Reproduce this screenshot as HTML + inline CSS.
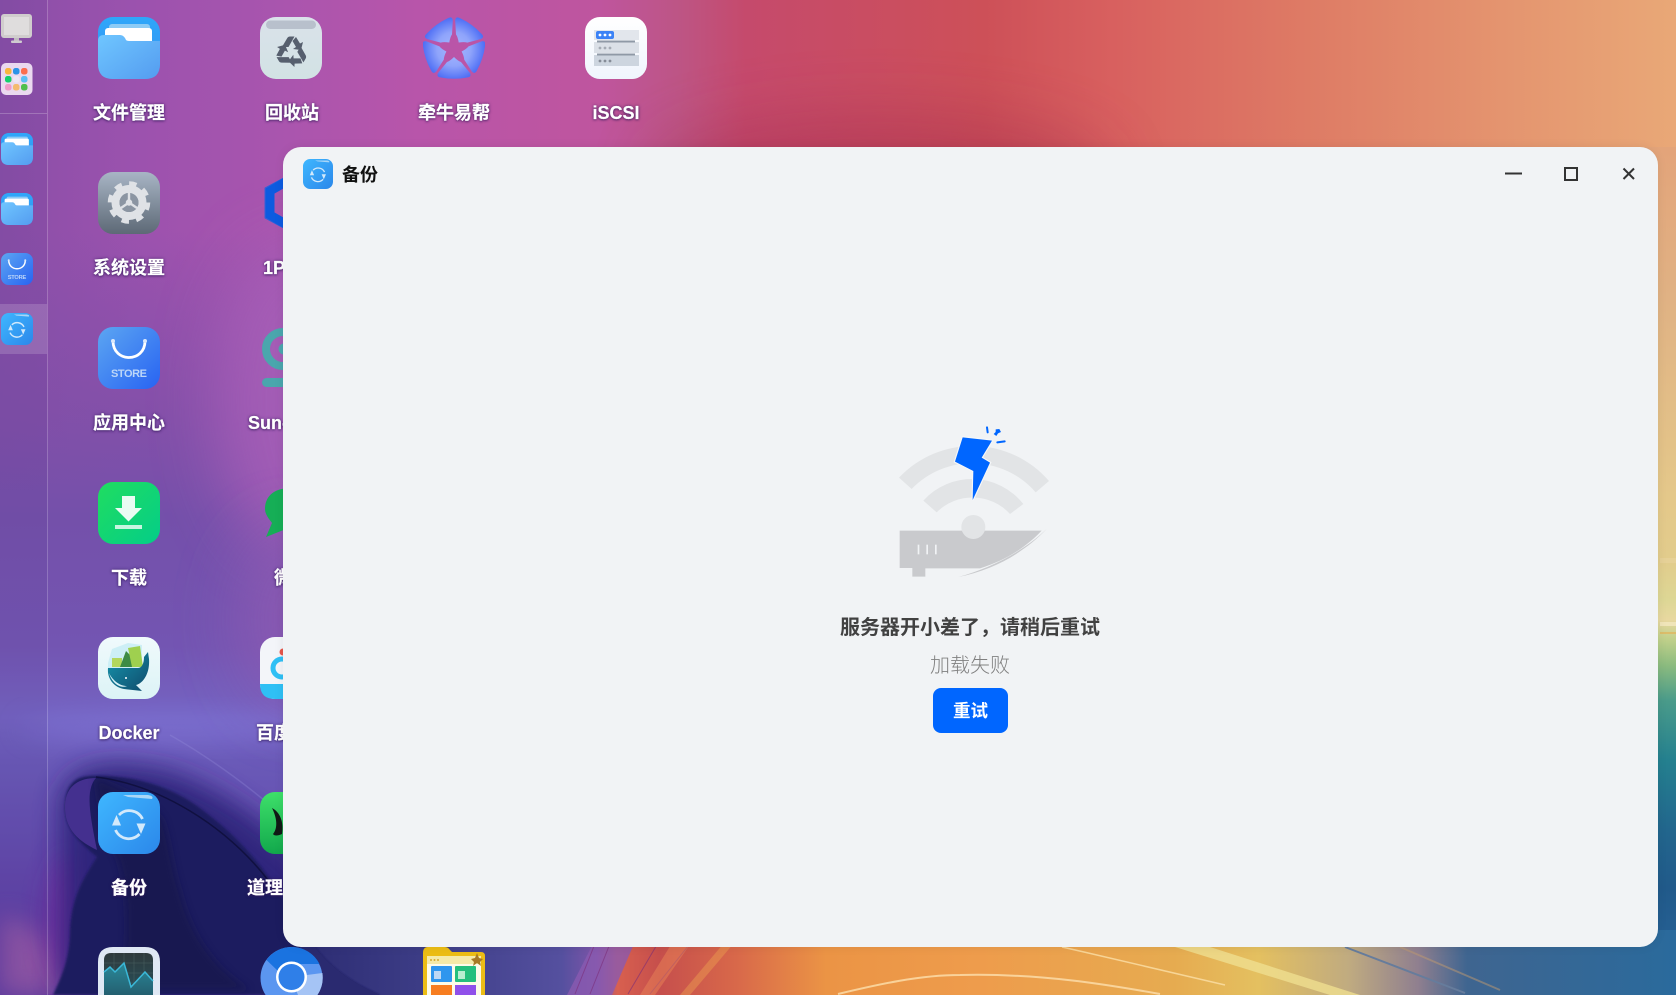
<!DOCTYPE html>
<html lang="zh">
<head>
<meta charset="utf-8">
<title>备份</title>
<style>
html,body{margin:0;padding:0;width:1676px;height:995px;overflow:hidden;background:#8a4fa8;font-family:"Liberation Sans","Noto Sans CJK SC",sans-serif}
.abs{position:absolute}
#bg{position:absolute;left:0;top:0}
.lab{position:absolute;width:180px;text-align:center;color:#fff;font-weight:700;font-size:18px;line-height:24px;white-space:nowrap;-webkit-text-stroke:.2px #fff;text-shadow:0 0 3px rgba(50,25,90,.75),0 1px 2px rgba(50,25,90,.6)}
.ic{position:absolute;width:62px;height:62px}
.sb{position:absolute;left:1px;width:32px;height:32px}
#win{position:absolute;left:283px;top:147px;width:1375px;height:800px;background:#f1f3f5;border-radius:18px;box-shadow:0 0 10px rgba(0,0,0,.07)}
#title{position:absolute;left:59px;top:15px;font-size:18px;font-weight:700;color:#111;line-height:26px}
#h1{position:absolute;left:0;width:1375px;text-align:center;top:468px;font-size:20px;font-weight:700;color:#414141;line-height:26px;text-indent:-1px}
#h2{position:absolute;left:647px;top:505px;width:80px;text-align:center;font-size:20px;font-weight:300;color:#808080;line-height:28px}
#btn{position:absolute;left:650px;top:541px;width:75px;height:45px;background:#0066ff;border-radius:8px;color:#fff;font-weight:700;font-size:17.5px;line-height:47px;text-align:center}
</style>
</head>
<body>
<svg id="bg" width="1676" height="995" viewBox="0 0 1676 995" xmlns="http://www.w3.org/2000/svg">
<defs>
<linearGradient id="top" x1="0" x2="1676" y1="0" y2="0" gradientUnits="userSpaceOnUse">
<stop offset="0" stop-color="#8a4fa8"/><stop offset=".084" stop-color="#9c52ae"/><stop offset=".167" stop-color="#a955ae"/><stop offset=".25" stop-color="#b855aa"/><stop offset=".358" stop-color="#bf559e"/><stop offset=".405" stop-color="#bd5585"/><stop offset=".445" stop-color="#c54a6c"/><stop offset=".587" stop-color="#cd5058"/><stop offset=".664" stop-color="#d8605f"/><stop offset=".78" stop-color="#de7b65"/><stop offset=".896" stop-color="#e4946f"/><stop offset="1" stop-color="#e9a877"/>
</linearGradient>
<linearGradient id="leftv" x1="0" x2="0" y1="230" y2="947" gradientUnits="userSpaceOnUse">
<stop offset="0" stop-color="#7e4fa8" stop-opacity="0"/><stop offset=".25" stop-color="#7e4fa8" stop-opacity=".8"/><stop offset=".4" stop-color="#7450aa"/><stop offset=".58" stop-color="#7355b2"/><stop offset=".68" stop-color="#7464c2"/><stop offset=".74" stop-color="#6a5ab8"/><stop offset="1" stop-color="#5a3aa0"/>
</linearGradient>
<linearGradient id="rightv" x1="0" x2="0" y1="0" y2="995" gradientUnits="userSpaceOnUse">
<stop offset="0" stop-color="#e9a877"/><stop offset=".15" stop-color="#e3a47a"/><stop offset=".3" stop-color="#e0b284"/><stop offset=".5" stop-color="#e4c88a"/><stop offset=".563" stop-color="#e2cc8c"/><stop offset=".603" stop-color="#ddd795"/><stop offset=".623" stop-color="#e8d8a0"/><stop offset=".643" stop-color="#bfd08a"/><stop offset=".669" stop-color="#8bbb7f"/><stop offset=".704" stop-color="#4a9b8a"/><stop offset=".765" stop-color="#24808f"/><stop offset=".834" stop-color="#22668d"/><stop offset=".892" stop-color="#215a8a"/><stop offset="1" stop-color="#2a659c"/>
</linearGradient>
<linearGradient id="botg" x1="283" x2="1676" y1="0" y2="0" gradientUnits="userSpaceOnUse">
<stop offset="0" stop-color="#2a2a70"/><stop offset=".12" stop-color="#40408a"/><stop offset=".2" stop-color="#55509f"/><stop offset=".225" stop-color="#7d55a8"/><stop offset=".24" stop-color="#d8604f"/><stop offset=".27" stop-color="#c64f4c"/><stop offset=".325" stop-color="#d8684a"/><stop offset=".39" stop-color="#eb9445"/><stop offset=".5" stop-color="#ee9c4c"/><stop offset=".64" stop-color="#e6ab50"/><stop offset=".7" stop-color="#e4c060"/><stop offset=".765" stop-color="#c0ab80"/><stop offset=".815" stop-color="#8f7f8f"/><stop offset=".85" stop-color="#3f6590"/><stop offset="1" stop-color="#2a6a9c"/>
</linearGradient>
<filter id="b40" x="-60%" y="-60%" width="220%" height="220%"><feGaussianBlur stdDeviation="32"/></filter>
<filter id="b14" x="-60%" y="-60%" width="220%" height="220%"><feGaussianBlur stdDeviation="13"/></filter>
<filter id="b4" x="-20%" y="-20%" width="140%" height="140%"><feGaussianBlur stdDeviation="4"/></filter>
<filter id="b1"><feGaussianBlur stdDeviation="1"/></filter>
</defs>
<rect width="1676" height="995" fill="url(#top)"/>
<rect x="0" y="0" width="420" height="995" fill="url(#leftv)"/>
<ellipse cx="300" cy="400" rx="85" ry="160" fill="#a85fb8" opacity=".85" filter="url(#b40)"/>
<ellipse cx="300" cy="620" rx="60" ry="90" fill="#8c5ab2" opacity=".9" filter="url(#b40)"/>
<ellipse cx="170" cy="728" rx="150" ry="14" fill="#8278dc" opacity=".5" filter="url(#b14)"/>
<path d="M0 995 L0 915 Q70 935 70 995Z" fill="#b468a8" opacity=".6" filter="url(#b14)"/>
<ellipse cx="70" cy="920" rx="22" ry="65" fill="#8a2fa6" opacity=".7" filter="url(#b14)"/>
<!-- dark red band along top -->
<ellipse cx="880" cy="175" rx="230" ry="60" fill="#a02c50" opacity=".42" filter="url(#b40)"/>
<!-- right strip -->
<rect x="1630" y="147" width="46" height="848" fill="url(#rightv)"/>
<rect x="1660" y="558" width="16" height="5" fill="#e8d39b" opacity=".7"/>
<rect x="1660" y="622" width="16" height="4" fill="#f4e8c0" opacity=".8"/>
<rect x="1660" y="632" width="16" height="2" fill="#e0b860" opacity=".8"/>
<!-- swirl halo -->
<path d="M60 800 C66 765 110 758 170 772 C240 795 290 845 340 895 L340 994 L60 994Z" fill="#2c2478" opacity=".9" filter="url(#b14)"/>
<!-- bottom strip -->
<rect x="283" y="930" width="1393" height="65" fill="url(#botg)"/>
<path d="M567 995 L600 930 L640 930 L612 995Z" fill="#8a5ab0" opacity=".8"/>
<path d="M628 994 L665 931 M650 994 L700 931 M590 994 L615 931 M575 994 L600 931" stroke="#7c2d78" stroke-width="1" fill="none" opacity=".6"/>
<path d="M640 995 L680 930 L700 930 L655 995Z" fill="#ee8a58" opacity=".45"/>
<path d="M680 995 L735 930 L745 930 L690 995Z" fill="#eda050" opacity=".45"/>
<path d="M838 994 C880 984 920 975 960 975 C1040 973 1110 985 1160 994" stroke="#fbdca8" stroke-width="2" fill="none" opacity=".85"/>
<path d="M1062 947 C1120 960 1180 975 1225 985" stroke="#fbe0a8" stroke-width="1.500" fill="none" opacity=".8"/>
<path d="M1175 947 L1210 947 L1360 995 L1330 995Z" fill="#efdf90" opacity=".8"/>
<path d="M1345 947 L1465 993" stroke="#667c9c" stroke-width="2" fill="none"/>
<path d="M1400 947 L1500 990" stroke="#c09a70" stroke-width="2" fill="none" opacity=".5"/>
<!-- swirl -->
<path d="M65 805 C66 782 78 775 95 776 C130 775 172 785 205 812 C245 842 270 875 300 925 C320 960 345 980 380 995 L53 995 C64 972 70 955 70 930 C72 895 84 878 97 857 C80 842 64 830 65 805Z" fill="#1d1d5e" filter="url(#b1)"/>
<path d="M65 805 C66 785 80 778 96 778 C85 790 90 815 97 850 C80 842 64 830 65 805Z" fill="#44308f"/>
<path d="M96 778 C125 790 150 800 163 820 C170 840 172 865 180 890 C190 930 210 965 250 990 L120 990 C128 950 130 900 118 860 C108 840 98 810 96 778Z" fill="#131445" opacity=".55" filter="url(#b4)"/>
<path d="M300 925 C320 960 345 980 380 995 L300 995Z" fill="#2a2a70"/>
<path d="M96 777 C160 785 225 825 268 880" stroke="#0e0e38" stroke-width="1.500" fill="none" opacity=".8"/>
<path d="M170 735 C205 755 240 780 270 805" stroke="#9a92e0" stroke-width="1.500" fill="none" opacity=".28"/>
<!-- sidebar -->
<rect x="0" y="0" width="47" height="995" fill="#503a8c" opacity=".1"/>
<rect x="47" y="0" width="1" height="995" fill="#fff" opacity=".2"/>
<rect x="0" y="113" width="47" height="1" fill="#fff" opacity=".22"/>
<rect x="0" y="304" width="47" height="50" fill="#fff" opacity=".16"/>
</svg>

<svg width="0" height="0" style="position:absolute" xmlns="http://www.w3.org/2000/svg">
<defs>
<linearGradient id="fgA" x1="0" y1="0" x2="0" y2="1"><stop offset="0" stop-color="#2ea7fa"/><stop offset="1" stop-color="#3a8ff0"/></linearGradient>
<linearGradient id="fgB" x1="0" y1="0" x2="1" y2="1"><stop offset="0" stop-color="#6fc6ff"/><stop offset="1" stop-color="#549cf0"/></linearGradient>
<linearGradient id="bkA" x1="0" y1="0" x2="1" y2="1"><stop offset="0" stop-color="#3fb7ff"/><stop offset="1" stop-color="#2b87ea"/></linearGradient>
<linearGradient id="stA" x1="0" y1="0" x2="1" y2="1"><stop offset="0" stop-color="#5ca6f2"/><stop offset="1" stop-color="#2863f2"/></linearGradient>
<symbol id="folder" viewBox="0 0 62 62">
<rect width="62" height="62" rx="15" fill="url(#fgA)"/>
<rect x="11" y="7" width="41" height="14" rx="3" fill="#8ccbf5"/>
<rect x="7" y="11" width="47" height="16" rx="3" fill="#fff"/>
<path d="M0 24 Q0 18 6 18 L22 18 Q25 18 27 21 L28 23 Q29 24 31 24 L62 24 L62 47 Q62 62 47 62 L15 62 Q0 62 0 47Z" fill="url(#fgB)"/>
</symbol>
<symbol id="backup" viewBox="0 0 62 62">
<rect width="62" height="62" rx="15" fill="url(#bkA)"/>
<path d="M25 3 L50 3 Q56 4 54 7 L30 5Z" fill="#a9d6f7"/>
<g fill="none" stroke="#d2e9fb" stroke-width="2.800">
<path d="M21 23 A14.500 14.500 0 0 1 44.500 27"/>
<path d="M41.500 42 A14.500 14.500 0 0 1 17.500 38"/>
</g>
<path d="M18.500 23 L23 33.500 L14 33.500Z" fill="#d2e9fb"/>
<path d="M43 42 L38.500 31.500 L47.500 31.500Z" fill="#d2e9fb"/>
</symbol>
<symbol id="store" viewBox="0 0 62 62">
<rect width="62" height="62" rx="15" fill="url(#stA)"/>
<path d="M15 14 C15 36 47 36 47 14" fill="none" stroke="#fff" stroke-width="2.800" stroke-linecap="round"/>
<circle cx="15" cy="14" r="2" fill="#dbe9fb"/><circle cx="47" cy="14" r="2" fill="#dbe9fb"/>
<text x="31" y="50" text-anchor="middle" font-family="Liberation Sans,sans-serif" font-size="11" font-weight="700" textLength="36" lengthAdjust="spacing" fill="#bcd6f8">STORE</text>
</symbol>
</defs>
</svg>

<!-- sidebar icons -->
<svg class="abs" style="left:1px;top:14px" width="32" height="30" viewBox="0 0 32 30"><rect x="0" y="0" width="31" height="24" rx="3" fill="#d0cdcd"/><rect x="3" y="3" width="25" height="18" fill="#dfdddd"/><rect x="13" y="24" width="5" height="3" fill="#c0bcc0"/><rect x="10" y="26.500" width="11" height="2.500" rx="1" fill="#cfcbd0"/></svg>
<svg class="abs" style="left:1px;top:63px" width="32" height="32" viewBox="0 0 32 32"><rect width="31.500" height="32" rx="5" fill="#ead9ef"/><g>
<rect x="4" y="5" width="6.500" height="6.500" rx="2.500" fill="#f9b63e"/><rect x="12" y="5" width="6.500" height="6.500" rx="2.500" fill="#2b93e8"/><rect x="20" y="5" width="6.500" height="6.500" rx="2.500" fill="#fc6d4f"/>
<rect x="4" y="13" width="6.500" height="6.500" rx="2.500" fill="#14cf6c"/><rect x="12" y="13" width="6.500" height="6.500" rx="2.500" fill="#ece6f4"/><rect x="20" y="13" width="6.500" height="6.500" rx="2.500" fill="#5bbef5"/>
<rect x="4" y="21" width="6.500" height="6.500" rx="2.500" fill="#f09ac8"/><rect x="12" y="21" width="6.500" height="6.500" rx="2.500" fill="#f4ba70"/><rect x="20" y="21" width="6.500" height="6.500" rx="2.500" fill="#4fbf4f"/></g></svg>
<svg class="sb" style="top:133px"><use href="#folder" width="32" height="32"/></svg>
<svg class="sb" style="top:193px"><use href="#folder" width="32" height="32"/></svg>
<svg class="sb" style="top:253px"><use href="#store" width="32" height="32"/></svg>
<svg class="sb" style="top:313px"><use href="#backup" width="32" height="32"/></svg>

<!-- desktop icons col 1 -->
<svg class="ic" style="left:98px;top:17px"><use href="#folder" width="62" height="62"/></svg>
<div class="lab" style="left:39px;top:101px">文件管理</div>

<svg class="ic" style="left:98px;top:172px" viewBox="0 0 62 62"><defs><linearGradient id="gr" x1="0" y1="0" x2="0" y2="1"><stop offset="0" stop-color="#a8b5c5"/><stop offset="1" stop-color="#5d6976"/></linearGradient></defs><rect width="62" height="62" rx="15" fill="url(#gr)"/>
<circle cx="31" cy="30.500" r="19" fill="none" stroke="#dfe2e6" stroke-width="4.500" stroke-dasharray="7.500 7.420"/>
<circle cx="31" cy="30.500" r="13.500" fill="none" stroke="#dfe2e6" stroke-width="8"/>
<circle cx="31" cy="30.500" r="9.500" fill="#8b95a2"/>
<path d="M31 30.500 L31 21 M31 30.500 L23 36 M31 30.500 L39 36" stroke="#dfe2e6" stroke-width="2.400"/><circle cx="31" cy="30.500" r="3.200" fill="#dfe2e6"/></svg>
<div class="lab" style="left:39px;top:256px">系统设置</div>

<svg class="ic" style="left:98px;top:327px"><use href="#store" width="62" height="62"/></svg>
<div class="lab" style="left:39px;top:411px">应用中心</div>

<svg class="ic" style="left:98px;top:482px" viewBox="0 0 62 62"><defs><linearGradient id="dl" x1="0" y1="0" x2="1" y2="1"><stop offset="0" stop-color="#20dd60"/><stop offset="1" stop-color="#04cd88"/></linearGradient></defs><rect width="62" height="62" rx="15" fill="url(#dl)"/>
<path d="M24 14 L37 14 L37 26 L44 26 L30.500 39.500 L17 26 L24 26Z" fill="#eafcf3"/><rect x="17" y="43" width="27" height="4" fill="#c8f5e0"/></svg>
<div class="lab" style="left:39px;top:566px">下载</div>

<svg class="ic" style="left:98px;top:637px" viewBox="0 0 62 62"><defs><linearGradient id="wh" x1="0" y1="0" x2="1" y2="1"><stop offset="0" stop-color="#1696ae"/><stop offset="1" stop-color="#0f4a6b"/></linearGradient><linearGradient id="dk" x1="0" y1="0" x2="0" y2="1"><stop offset="0" stop-color="#f0fafc"/><stop offset="1" stop-color="#dcf3f6"/></linearGradient></defs><rect width="62" height="62" rx="15" fill="url(#dk)"/>
<path d="M10 26 L14 12 L30 6 L44 8 L44 30 L10 34Z" fill="#cdeff6"/>
<rect x="14" y="21" width="10" height="9" fill="#b3d75d"/>
<path d="M22 30 L28 14 L44 30Z" fill="#3d8b45"/>
<path d="M30 11 L42 9 L45 30 L34 30Z" fill="#9fd04f"/>
<path d="M10 31 L40 31 C44 31 46 26 46 20 L50 15 L51 22 C52 35 46 46 38 48 L44 54 L26 52 C16 50 9 42 10 31Z" fill="url(#wh)"/>
<path d="M11 36 C15 44 22 49 29 49 C22 52 14 46 11 36Z" fill="#d9f2f6"/><circle cx="28" cy="41" r="1" fill="#fff"/></svg>
<div class="lab" style="left:39px;top:721px">Docker</div>

<svg class="ic" style="left:98px;top:792px"><use href="#backup" width="62" height="62"/></svg>
<div class="lab" style="left:39px;top:876px">备份</div>

<svg class="ic" style="left:98px;top:947px;height:48px" viewBox="0 0 62 48"><defs><linearGradient id="sc" x1="0" y1="0" x2="0" y2="1"><stop offset="0" stop-color="#2f3a3c"/><stop offset="1" stop-color="#26505c"/></linearGradient><linearGradient id="cf" x1="0" y1="0" x2="0" y2="1"><stop offset="0" stop-color="#2a8a9a"/><stop offset="1" stop-color="#245f70"/></linearGradient></defs><path d="M0 15 Q0 0 15 0 L47 0 Q62 0 62 15 L62 48 L0 48Z" fill="#dfe8f4"/><path d="M6 13 Q6 6 13 6 L48 6 Q55 6 55 13 L55 48 L6 48Z" fill="url(#sc)"/>
<path d="M16 6 V48 M26 6 V48 M36 6 V48 M46 6 V48 M6 16 H55 M6 26 H55 M6 36 H55" stroke="#57706f" stroke-width=".5" opacity=".7"/>
<path d="M6 25 L12 20 L17 25 L26 16 L33 40 L47 25 L55 34 L55 48 L6 48Z" fill="url(#cf)"/>
<path d="M6 25 L12 20 L17 25 L26 16 L33 40 L47 25 L55 34" fill="none" stroke="#3bb8d8" stroke-width="1.500"/></svg>

<!-- col 2 -->
<svg class="ic" style="left:260px;top:17px" viewBox="0 0 62 62"><defs><linearGradient id="rc" x1="0" y1="0" x2="0" y2="1"><stop offset="0" stop-color="#dae2ea"/><stop offset="1" stop-color="#d2e2e4"/></linearGradient></defs><rect width="62" height="62" rx="16" fill="url(#rc)"/><rect x="6" y="3.500" width="50" height="8.500" rx="4.200" fill="#b8c0cc"/>
<g fill="#565f6e"><g><path d="M22 30 L27 21.500 Q28 19.500 30 19.500 L34.500 19.500 L28.500 30Z"/><path d="M36 20 L40 26.500 L43 25 L41 33 L33 32 L36 30 L32.500 24Z"/></g><g transform="rotate(120 31.500 35)"><path d="M22 30 L27 21.500 Q28 19.500 30 19.500 L34.500 19.500 L28.500 30Z"/><path d="M36 20 L40 26.500 L43 25 L41 33 L33 32 L36 30 L32.500 24Z"/></g><g transform="rotate(240 31.500 35)"><path d="M22 30 L27 21.500 Q28 19.500 30 19.500 L34.500 19.500 L28.500 30Z"/><path d="M36 20 L40 26.500 L43 25 L41 33 L33 32 L36 30 L32.500 24Z"/></g></g></svg>
<div class="lab" style="left:202px;top:101px">回收站</div>

<svg class="ic" style="left:260px;top:172px" viewBox="0 0 62 62"><path d="M31 2 L57 16 L57 46 L31 60 L5 46 L5 16Z" fill="none" stroke="#1f63e0" stroke-width=".8"/><path d="M31 7 L52 19 L52 43 L31 55 L10 43 L10 19Z" fill="none" stroke="#0d5be0" stroke-width="9"/></svg>
<div class="lab" style="left:202px;top:256px">1Panel</div>

<svg class="ic" style="left:260px;top:327px" viewBox="0 0 62 62"><circle cx="23" cy="22" r="17" fill="none" stroke="#4aa6ad" stroke-width="8"/><circle cx="24" cy="22" r="5.500" fill="#4aa6ad"/><rect x="2" y="51" width="58" height="9" rx="4.500" fill="#4aa6ad"/></svg>
<div class="lab" style="left:202px;top:411px">Sun-Panel</div>

<svg class="ic" style="left:260px;top:482px" viewBox="0 0 62 62"><path d="M31 6 C12 6 5 16 5 27 C5 33 10 38 12 41 L6 55 L26 47 C45 47 58 39 58 25 C58 13 48 6 31 6Z" fill="#16ae56"/></svg>
<div class="lab" style="left:202px;top:566px">微信</div>

<svg class="ic" style="left:260px;top:637px" viewBox="0 0 62 62"><rect width="62" height="62" rx="15" fill="#f3f5f9"/><path d="M0 47 L62 47 Q62 62 47 62 L15 62 Q0 62 0 47Z" fill="#2fc0f5"/><circle cx="22" cy="31" r="9" fill="none" stroke="#2fc0f5" stroke-width="5"/><circle cx="23" cy="15" r="3.500" fill="#e8564a"/></svg>
<div class="lab" style="left:202px;top:721px">百度网盘</div>

<svg class="ic" style="left:260px;top:792px" viewBox="0 0 62 62"><defs><linearGradient id="dg" x1="0" y1="0" x2="0" y2="1"><stop offset="0" stop-color="#3ee06a"/><stop offset="1" stop-color="#12a84c"/></linearGradient></defs><rect width="62" height="62" rx="15" fill="url(#dg)"/><path d="M12 16 C20 20 24 30 22 42 C18 44 14 44 13 42 C18 36 17 26 12 16Z" fill="#111a16"/></svg>
<div class="lab" style="left:202px;top:876px">道理云笔记</div>

<svg class="ic" style="left:260px;top:947px;width:63px;height:48px" viewBox="0 0 63 48"><path d="M5.600 48 A31 31 0 1 1 57.400 48Z" fill="#5b96f0"/><path d="M31.500 30 L62.400 26 A31 31 0 0 1 57.400 48 L38 48Z" fill="#a5c4f5"/><path d="M31.500 0 A31 31 0 0 1 59.500 17 L31.500 17 L18 24 L6.500 13 A31 31 0 0 1 31.500 0Z" fill="#1a73e0"/><circle cx="31.500" cy="30" r="15.500" fill="#fff"/><circle cx="31.500" cy="30" r="13" fill="#2f7fe8"/></svg>

<!-- col 3 -->
<svg class="ic" style="left:423px;top:17px" viewBox="0 0 62 62"><defs><radialGradient id="st" gradientUnits="userSpaceOnUse" cx="31" cy="32" r="31"><stop offset="0" stop-color="#a6b8ff"/><stop offset=".55" stop-color="#8fa4fb"/><stop offset="1" stop-color="#4f6ff5"/></radialGradient></defs>
<g fill="url(#st)"><path d="M31 40 Q35 44 38 45 L47 56 Q49 60 44 60.500 Q31 63 18 60.500 Q13 60 15 56 L24 45 Q27 44 31 40Z"/><path d="M31 40 Q35 44 38 45 L47 56 Q49 60 44 60.500 Q31 63 18 60.500 Q13 60 15 56 L24 45 Q27 44 31 40Z" transform="rotate(72 31 32)"/><path d="M31 40 Q35 44 38 45 L47 56 Q49 60 44 60.500 Q31 63 18 60.500 Q13 60 15 56 L24 45 Q27 44 31 40Z" transform="rotate(144 31 32)"/><path d="M31 40 Q35 44 38 45 L47 56 Q49 60 44 60.500 Q31 63 18 60.500 Q13 60 15 56 L24 45 Q27 44 31 40Z" transform="rotate(216 31 32)"/><path d="M31 40 Q35 44 38 45 L47 56 Q49 60 44 60.500 Q31 63 18 60.500 Q13 60 15 56 L24 45 Q27 44 31 40Z" transform="rotate(288 31 32)"/></g></svg>
<div class="lab" style="left:364px;top:101px">牵牛易帮</div>

<svg class="ic" style="left:423px;top:947px;height:48px" viewBox="0 0 62 48"><path d="M0 6 Q0 0 5 0 L22 0 Q25 0 27 3 L29 5 L58 5 Q62 5 62 9 L62 48 L0 48Z" fill="#ecbd15"/><rect x="4" y="9" width="54" height="39" fill="#fdfbe8"/><rect x="4" y="9" width="54" height="8" fill="#f5eaa8"/><circle cx="8" cy="13" r="1" fill="#d4a930"/><circle cx="11.500" cy="13" r="1" fill="#d4a930"/><circle cx="15" cy="13" r="1" fill="#d4a930"/>
<rect x="8" y="19" width="21" height="16" rx="1" fill="#2e96ee"/><rect x="32" y="19" width="21" height="16" rx="1" fill="#24bf7c"/><rect x="8" y="38" width="21" height="10" fill="#f77d20"/><rect x="32" y="38" width="21" height="10" fill="#9050ea"/>
<rect x="11" y="24" width="7" height="8" fill="#bcd8f4"/><rect x="35" y="24" width="7" height="8" fill="#b8eed0"/>
<path d="M54 6 L56 11 L60 12 L57 15 L58 19 L54 16 L50 19 L51 15 L48 12 L52 11Z" fill="#a87a24"/></svg>

<!-- col 4 -->
<svg class="ic" style="left:585px;top:17px" viewBox="0 0 62 62"><defs><linearGradient id="is" x1="0" y1="0" x2="0" y2="1"><stop offset="0" stop-color="#fff"/><stop offset="1" stop-color="#f0f5fd"/></linearGradient></defs><rect width="62" height="62" rx="15" fill="url(#is)"/>
<rect x="9" y="13" width="45" height="10" fill="#e2e6ec"/><rect x="9" y="25" width="45" height="11" fill="#dbe0e7"/><rect x="9" y="38" width="45" height="11" fill="#cdd5df"/>
<rect x="11" y="14" width="18" height="8" rx="2" fill="#3b82f6"/>
<g fill="#fff"><circle cx="15" cy="18" r="1.400"/><circle cx="20" cy="18" r="1.400"/><circle cx="25" cy="18" r="1.400"/></g>
<rect x="12" y="23.500" width="38" height="2" fill="#8f99a6"/><rect x="12" y="36.500" width="38" height="2" fill="#8f99a6"/>
<g fill="#a5abb4"><circle cx="15" cy="31" r="1.400"/><circle cx="20" cy="31" r="1.400"/><circle cx="25" cy="31" r="1.400"/></g>
<g fill="#868d98"><circle cx="15" cy="44" r="1.400"/><circle cx="20" cy="44" r="1.400"/><circle cx="25" cy="44" r="1.400"/></g></svg>
<div class="lab" style="left:526px;top:101px">iSCSI</div>

<!-- window -->
<div id="win">
  <svg class="abs" style="left:20px;top:12px" width="30" height="30"><use href="#backup" width="30" height="30"/></svg>
  <div id="title">备份</div>
  <svg class="abs" style="left:1215px;top:10px" width="150" height="34" viewBox="0 0 150 34" fill="none" stroke="#333" stroke-width="2">
    <path d="M7 16.500 H24"/>
    <rect x="67" y="11" width="12" height="12"/>
    <path d="M125.500 11.500 L136 22 M136 11.500 L125.500 22"/>
  </svg>
  <svg class="abs" style="left:537px;top:263px" width="300" height="330" viewBox="0 0 900 990">
    <path d="M237 203 A303 303 0 0 1 687 213 L647 247 A252 252 0 0 0 275 237Z" fill="#e2e4e6"/>
    <path d="M310 272 A196 196 0 0 1 610 282 L570 312 A152 152 0 0 0 350 307Z" fill="#e2e4e6"/>
    <path d="M239 362 L665 362 C620 410 560 450 480 475 L316 475 L316 500 L277 500 L277 474 L239 474Z" fill="#c9cacd"/>
    <path d="M681 356 C610 430 520 480 415 501 C510 475 610 425 681 356Z" fill="#c9cacd"/>
    <circle cx="460" cy="351" r="36" fill="#e2e4e6"/>
    <rect x="293" y="404" width="5" height="29" fill="#f1f3f5"/><rect x="319" y="404" width="5" height="29" fill="#f1f3f5"/><rect x="345" y="404" width="5" height="29" fill="#f1f3f5"/>
    <path d="M428 82 L516 92 L485 143 L510 158 L458 270 L460 183 L405 155Z" fill="#0066ff" stroke="#f6f7f9" stroke-width="7" stroke-linejoin="miter" paint-order="stroke"/>
    <path d="M501 52 L503 67" stroke="#0066ff" stroke-width="6" stroke-linecap="round"/>
    <path d="M532 97 L554 94" stroke="#0066ff" stroke-width="6" stroke-linecap="round"/>
    <path d="M527 58 L538 57 L543 66 L534 70 L529 78 L521 72 L527 66Z" fill="#0066ff"/>
  </svg>
  <div id="h1">服务器开小差了，请稍后重试</div>
  <div id="h2">加载失败</div>
  <div id="btn">重试</div>
</div>
</body>
</html>
